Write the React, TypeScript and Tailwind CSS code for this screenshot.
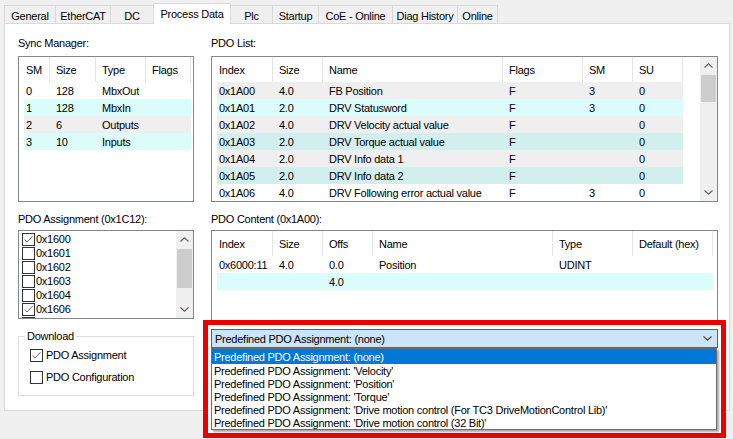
import React from "react";

type Col = { label: string; w: string; first?: boolean };
type Row = { cells: string[]; bg: string };

const tabs = [
  { label: "General", w: "w-[51px]" },
  { label: "EtherCAT", w: "w-[55px]" },
  { label: "DC", w: "w-[43px]" },
  { label: "Process Data", w: "w-[78px]", active: true },
  { label: "Plc", w: "w-[41px]" },
  { label: "Startup", w: "w-[46px]" },
  { label: "CoE - Online", w: "w-[74px]" },
  { label: "Diag History", w: "w-[65px]" },
  { label: "Online", w: "w-[41px]", last: true },
];

const GRAY = "bg-[#efefef]";
const CYAN = "bg-[#dcfcfc]";
const CYAN2 = "bg-[#d3eeef]";
const WHITE = "bg-white";

const syncCols: Col[] = [
  { label: "SM", w: "w-[26px]", first: true },
  { label: "Size", w: "w-[46px]" },
  { label: "Type", w: "w-[50px]" },
  { label: "Flags", w: "w-[45px]" },
];

const syncRows: Row[] = [
  { cells: ["0", "128", "MbxOut", ""], bg: WHITE },
  { cells: ["1", "128", "MbxIn", ""], bg: CYAN },
  { cells: ["2", "6", "Outputs", ""], bg: GRAY },
  { cells: ["3", "10", "Inputs", ""], bg: CYAN },
];

const pdoCols: Col[] = [
  { label: "Index", w: "w-[56px]", first: true },
  { label: "Size", w: "w-[50px]" },
  { label: "Name", w: "w-[180px]" },
  { label: "Flags", w: "w-[80px]" },
  { label: "SM", w: "w-[50px]" },
  { label: "SU", w: "w-[50px]" },
];

const pdoRows: Row[] = [
  { cells: ["0x1A00", "4.0", "FB Position", "F", "3", "0"], bg: GRAY },
  { cells: ["0x1A01", "2.0", "DRV Statusword", "F", "3", "0"], bg: CYAN },
  { cells: ["0x1A02", "4.0", "DRV Velocity actual value", "F", "", "0"], bg: GRAY },
  { cells: ["0x1A03", "2.0", "DRV Torque actual value", "F", "", "0"], bg: CYAN2 },
  { cells: ["0x1A04", "2.0", "DRV Info data 1", "F", "", "0"], bg: GRAY },
  { cells: ["0x1A05", "2.0", "DRV Info data 2", "F", "", "0"], bg: CYAN2 },
  { cells: ["0x1A06", "4.0", "DRV Following error actual value", "F", "3", "0"], bg: WHITE },
];

const contentCols: Col[] = [
  { label: "Index", w: "w-[56px]", first: true },
  { label: "Size", w: "w-[50px]" },
  { label: "Offs", w: "w-[50px]" },
  { label: "Name", w: "w-[180px]" },
  { label: "Type", w: "w-[80px]" },
  { label: "Default (hex)", w: "w-[80px]" },
];

const contentRows: Row[] = [
  { cells: ["0x6000:11", "4.0", "0.0", "Position", "UDINT", ""], bg: WHITE },
  { cells: ["", "", "4.0", "", "", ""], bg: CYAN },
];

const assignments = [
  { label: "0x1600", checked: true },
  { label: "0x1601", checked: false },
  { label: "0x1602", checked: false },
  { label: "0x1603", checked: false },
  { label: "0x1604", checked: false },
  { label: "0x1606", checked: true },
  { label: "", checked: false },
];

const options = [
  "Predefined PDO Assignment: (none)",
  "Predefined PDO Assignment: 'Velocity'",
  "Predefined PDO Assignment: 'Position'",
  "Predefined PDO Assignment: 'Torque'",
  "Predefined PDO Assignment: 'Drive motion control (For TC3 DriveMotionControl Lib)'",
  "Predefined PDO Assignment: 'Drive motion control (32 Bit)'",
];

function Chevron({ up, color = "#606060" }: { up?: boolean; color?: string }) {
  return (
    <svg width="9" height="5" viewBox="0 0 9 5">
      <path
        d={up ? "M0.5 4.5 L4.5 0.8 L8.5 4.5" : "M0.5 0.5 L4.5 4.2 L8.5 0.5"}
        fill="none"
        stroke={color}
        strokeWidth="1.1"
      />
    </svg>
  );
}

function Scrollbar({ thumb }: { thumb: string }) {
  return (
    <div className="w-[17px] h-full bg-[#f0f0f0] flex flex-col shrink-0">
      <div className="h-[17px] flex items-center justify-center">
        <Chevron up />
      </div>
      <div className="flex-1 px-[1px] pt-[1px]">
        <div className={`bg-[#cdcdcd] ${thumb}`} />
      </div>
      <div className="h-[17px] flex items-center justify-center">
        <Chevron />
      </div>
    </div>
  );
}

function CheckBox({ checked }: { checked?: boolean }) {
  return (
    <div className="w-[13px] h-[13px] border border-[#333333] bg-white shrink-0 flex items-center justify-center">
      {checked && (
        <svg width="11" height="11" viewBox="0 0 11 11">
          <path d="M1.5 5.5 L4 8 L9.5 2.2" fill="none" stroke="#6a6a6a" strokeWidth="1" />
        </svg>
      )}
    </div>
  );
}

function ListTable({
  cols,
  rows,
  height,
  scroll,
}: {
  cols: Col[];
  rows: Row[];
  height: string;
  scroll?: string;
}) {
  return (
    <div className={`border border-[#828790] bg-white flex ${height}`}>
      <div className="flex-1 pl-[5px] overflow-hidden">
        <div className="flex h-[25px]">
          {cols.map((c) => (
            <div
              key={c.label}
              className={`${c.w} ${c.first ? "pl-[2px]" : "pl-[6px]"} shrink-0 border-r border-[#e5e5e5] flex items-center`}
            >
              {c.label}
            </div>
          ))}
        </div>
        {rows.map((r, i) => (
          <div key={i} className={`flex h-[17px] w-fit ${r.bg}`}>
            {r.cells.map((cell, j) => (
              <div
                key={j}
                className={`${cols[j].w} ${cols[j].first ? "pl-[2px]" : "pl-[6px]"} shrink-0 flex items-center whitespace-nowrap`}
              >
                {cell}
              </div>
            ))}
          </div>
        ))}
      </div>
      {scroll && <Scrollbar thumb={scroll} />}
    </div>
  );
}

export default function App() {
  return (
    <div className="relative w-[733px] h-[439px] bg-[#f0f0f0] overflow-hidden text-[11px] leading-[14px] tracking-[-0.25px] text-black font-['Liberation_Sans',Arial,sans-serif]">
      {/* Tabs */}
      <div className="flex items-end h-[23px] pl-[4px]">
        {tabs.map((t, i) =>
          t.active ? (
            <div
              key={t.label}
              className={`${t.w} h-[21px] -mb-px relative z-10 bg-white border border-b-0 border-[#d9d9d9] flex items-center justify-center`}
            >
              {t.label}
            </div>
          ) : (
            <div
              key={t.label}
              className={`${t.w} h-[18px] pt-[3px] border-t border-[#d9d9d9] flex items-center justify-center ${
                tabs[i - 1]?.active ? "" : "border-l"
              } ${t.last ? "border-r" : ""}`}
            >
              {t.label}
            </div>
          )
        )}
      </div>

      {/* Panel */}
      <div className="ml-[4px] w-[726px] h-[388px] bg-white border border-[#d9d9d9] pl-[13px] pt-[12px] flex gap-[17px]">
        {/* Left column */}
        <div className="w-[176px] flex flex-col">
          <div>Sync Manager:</div>
          <div className="mt-[6px]">
            <ListTable cols={syncCols} rows={syncRows} height="h-[146px]" />
          </div>

          <div className="mt-[10px]">PDO Assignment (0x1C12):</div>
          <div className="mt-[4px] h-[89px] border border-[#828790] flex">
            <div className="flex-1 pl-[3px] pt-[1px] overflow-hidden">
              {assignments.map((a, i) => (
                <div key={i} className="h-[14px] flex items-center gap-[1px]">
                  <CheckBox checked={a.checked} />
                  <span>{a.label}</span>
                </div>
              ))}
            </div>
            <Scrollbar thumb="h-[39px]" />
          </div>

          <fieldset className="mt-[10px] border border-[#dcdcdc] pl-[11px] pb-[11px] h-[67px]">
            <legend className="-ml-[5px] px-[2px]">Download</legend>
            <div className="mt-[5px] h-[14px] flex items-center gap-[3px]">
              <CheckBox checked />
              <span>PDO Assignment</span>
            </div>
            <div className="mt-[8px] h-[14px] flex items-center gap-[3px]">
              <CheckBox />
              <span>PDO Configuration</span>
            </div>
          </fieldset>
        </div>

        {/* Right column */}
        <div className="w-[507px] flex flex-col">
          <div>PDO List:</div>
          <div className="mt-[6px]">
            <ListTable cols={pdoCols} rows={pdoRows} height="h-[146px]" scroll="h-[27px]" />
          </div>

          <div className="mt-[10px]">PDO Content (0x1A00):</div>
          <div className="mt-[4px]">
            <ListTable cols={contentCols} rows={contentRows} height="h-[93px]" />
          </div>
        </div>
      </div>

      {/* Highlighted predefined assignment combo */}
      <div className="absolute left-[203px] top-[320px] w-[523px] h-[118px] border-[5px] border-[#ec0000] bg-white pl-[3px] pt-[4px] z-20">
        <div className="w-[507px] h-[19px] border border-[#0078d7] bg-[#cce4f7] flex items-center justify-between pl-[3px] pr-[5px]">
          <span>Predefined PDO Assignment: (none)</span>
          <Chevron color="#404040" />
        </div>
        <div className="w-[506px] border border-[#6e6e6e] bg-white shadow-[2px_2px_2px_rgba(0,0,0,0.35)]">
          {options.map((o, i) => (
            <div
              key={o}
              className={`pl-[2px] flex items-center whitespace-nowrap ${
                i === 0 ? "h-[15px] bg-[#0078d7] text-white" : "h-[13px]"
              }`}
            >
              {o}
            </div>
          ))}
        </div>
      </div>
    </div>
  );
}
